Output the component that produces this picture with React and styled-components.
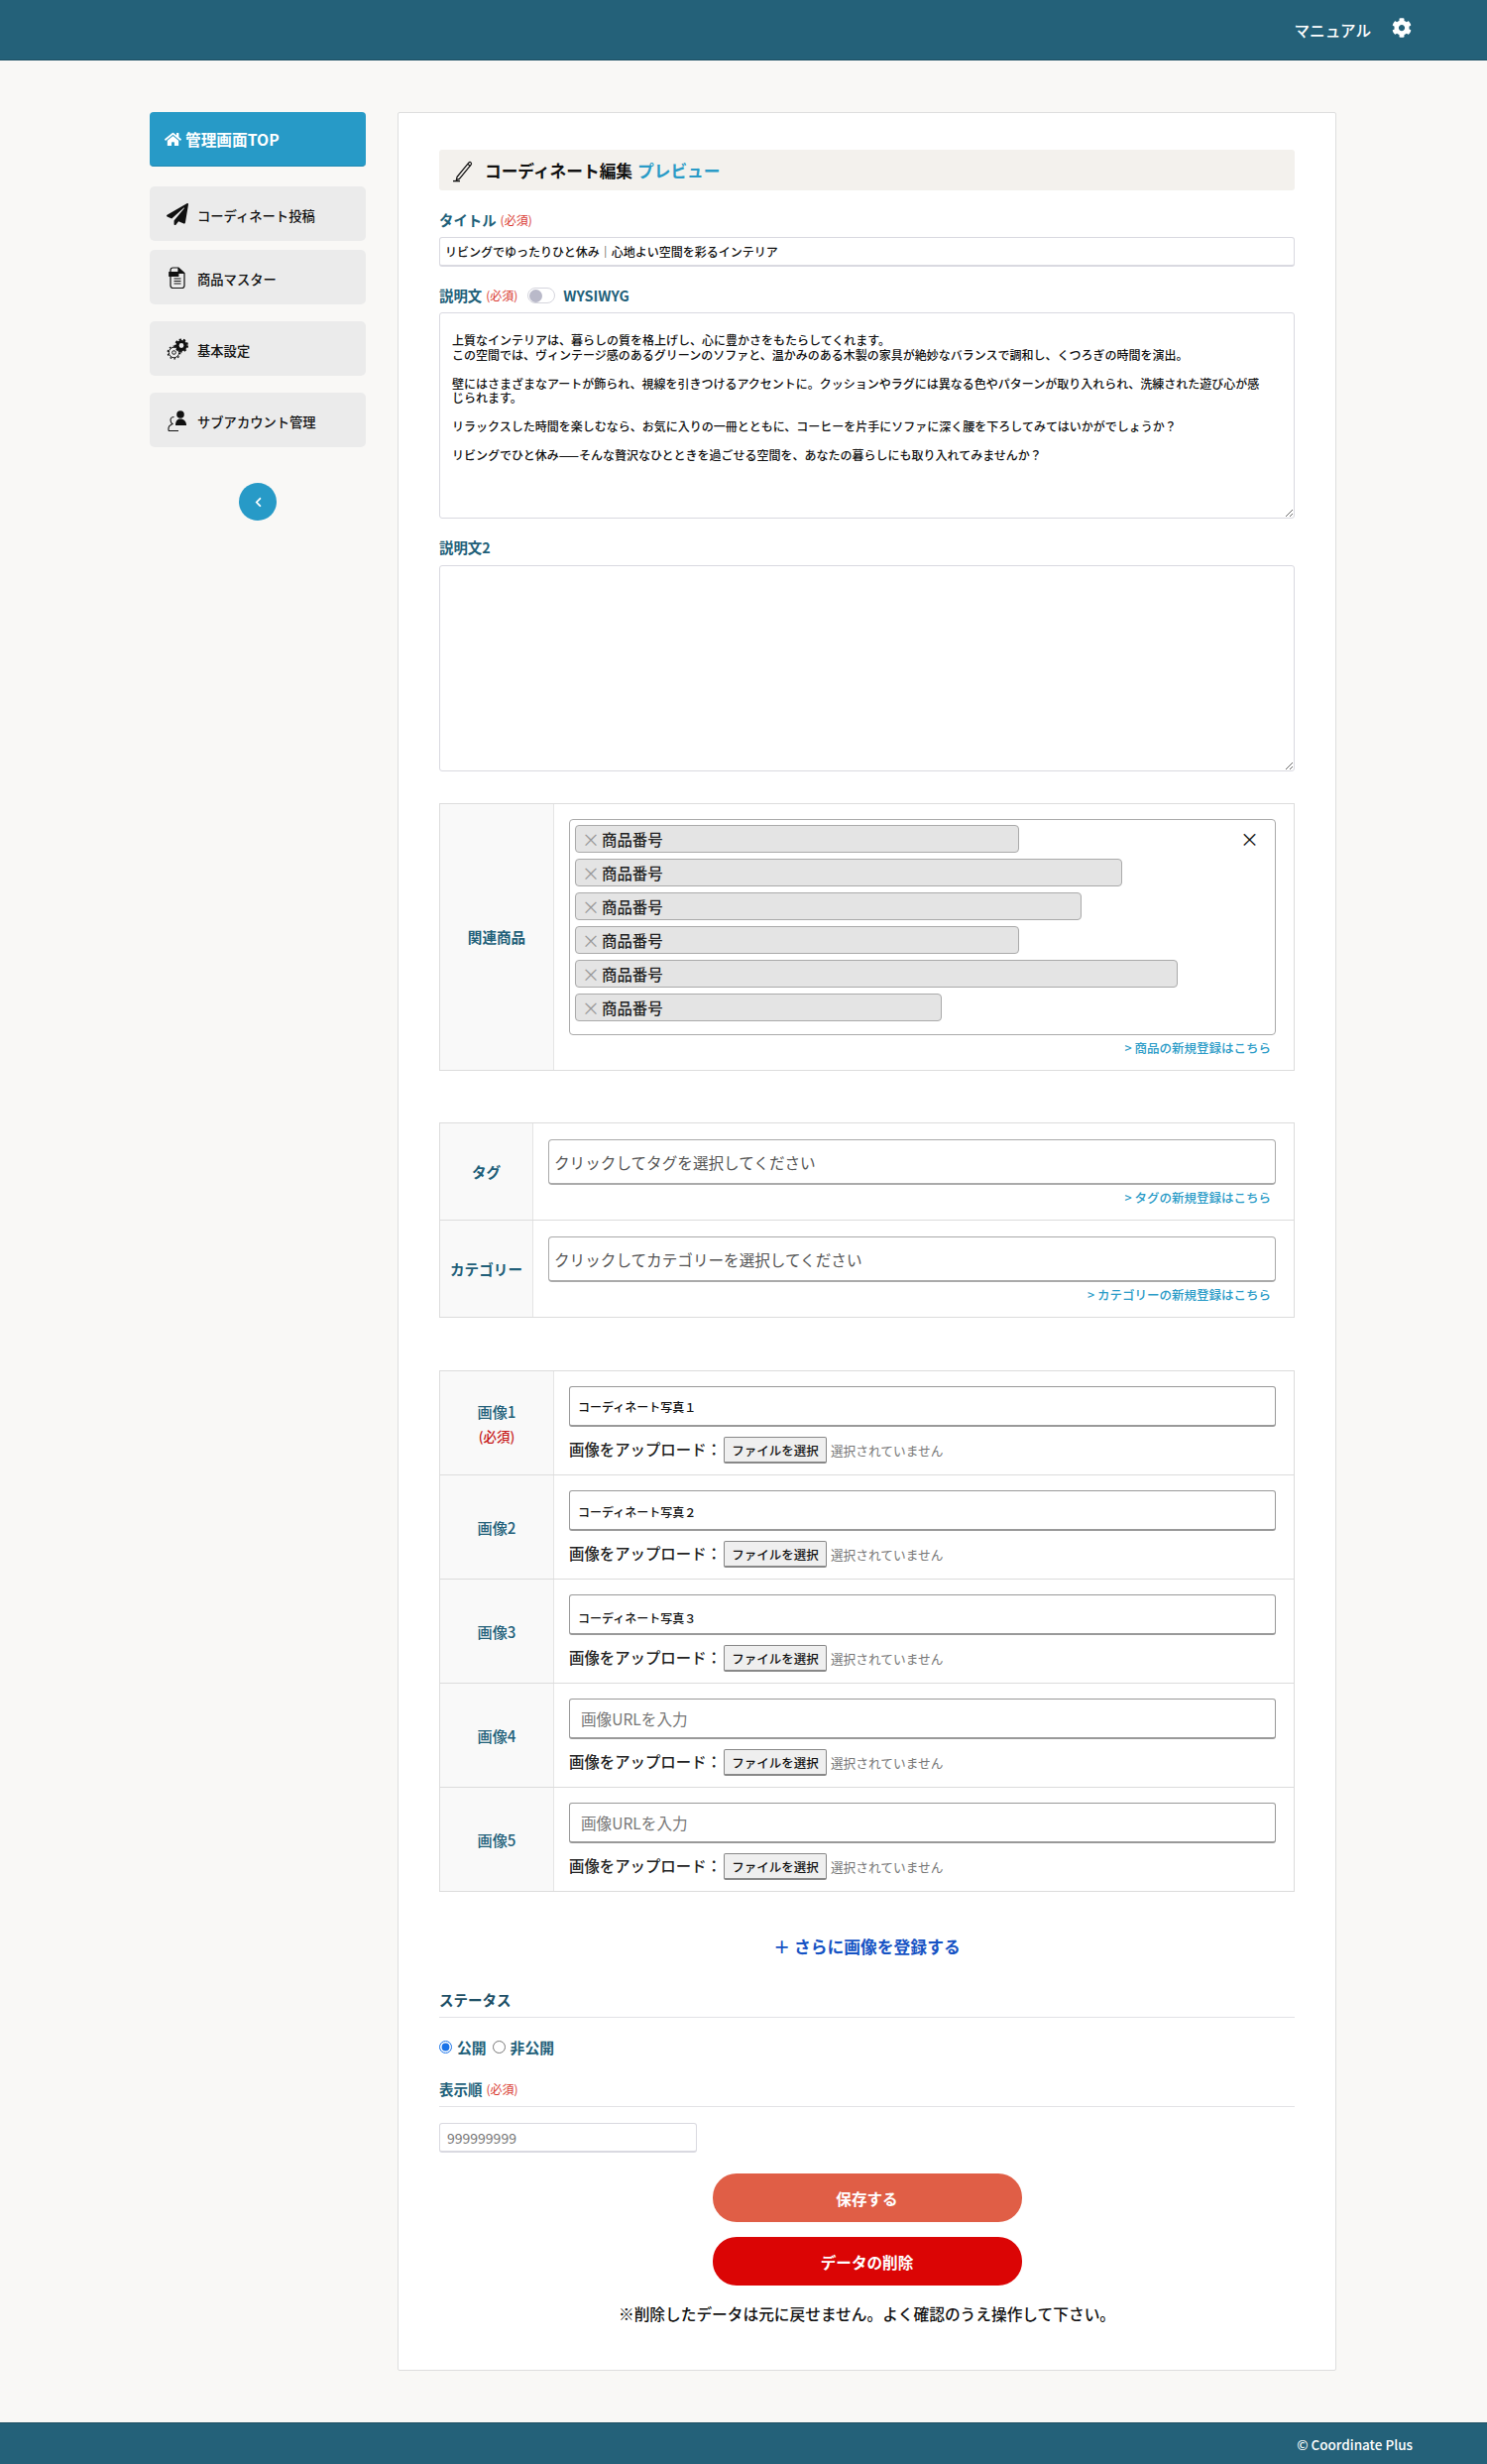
import React from "react";
import styled, { createGlobalStyle } from "styled-components";
import { FaHome, FaPaperPlane, FaCog, FaChevronLeft } from "react-icons/fa";

const Global = createGlobalStyle`
  html, body { margin: 0; padding: 0; background: #f9f8f6; }
  body { font-family: "Noto Sans CJK JP", "Noto Sans", sans-serif; color: #111; }
  * { box-sizing: border-box; }
`;

const TEAL = "#215f79";
const BLUE = "#2a9bc7";

const Header = styled.header`
  height: 61px; background: #246179; border-bottom: 1px solid #1d4f63;
  display: flex; align-items: center; justify-content: flex-end; gap: 21px;
  padding: 0 76px 1px 0; color: #fff;
`;
const HeaderLink = styled.a`font-size: 15.6px; font-weight: 500; line-height: 20px; margin: 0 0 0 -2px;`;
const GearButton = styled.span`display: flex; font-size: 20px; margin-top: -3px;`;

const Shell = styled.div`
  display: flex; align-items: flex-start; gap: 32px;
  padding: 52px 0 52px 151px;
`;
const Side = styled.nav`width: 218px; display: flex; flex-direction: column;`;
const TopLink = styled.a`
  height: 55px; background: #279ac7; border-radius: 4px; color: #fff;
  display: flex; align-items: center; gap: 4px; padding-left: 15px;
  font-size: 15.7px; font-weight: 700; border-bottom: 1px solid #2289b2;
  svg { font-size: 17px; }
`;
const SideLink = styled.a`
  height: 55px; margin-top: ${p => p.$mt}px; background: #ebebeb; border-radius: 5px;
  display: flex; align-items: center; gap: 9px; padding: 3px 0 0 17px;
  font-size: 13.3px; color: #111; font-weight: 500;
  svg { width: 22px; height: 24px; flex: none; margin-top: -3px; }
`;
const Collapse = styled.button`
  width: 38px; height: 38px; border-radius: 50%; border: 0; background: #279ac7; color: #fff;
  align-self: center; margin-top: 36px; display: flex; align-items: center; justify-content: center;
  font-size: 11px; padding: 0;
`;

const Card = styled.main`
  width: 947px; background: #fff; border: 1px solid #dedede; border-radius: 2px;
  padding: 37px 41px 45px;
`;
const Title = styled.h1`
  margin: 0 0 20px; height: 41px; background: #f3f1ed; border-radius: 3px;
  display: flex; align-items: center; padding-left: 13px; gap: 9px;
  font-size: 16.7px; font-weight: 700; color: #111;
  svg { width: 24px; height: 24px; }
`;
const Preview = styled.a`color: ${BLUE}; margin-left: -4px;`;
const Label = styled.div`
  height: 20px; margin-bottom: ${p => p.$mb || 7}px; display: flex; align-items: center; gap: 4px;
  font-size: 14.4px; line-height: 20px; font-weight: 700; color: ${TEAL};
`;
const Req = styled.span`font-size: 12px; font-weight: 400; color: #d9392f;`;
const TextInput = styled.input`
  display: block; width: 100%; height: 30px; border: 1px solid #d9d9e0; border-bottom-width: 2px; border-radius: 3px;
  padding: 0 5px; font: 500 12px "Noto Sans CJK JP", sans-serif; color: #111; background: #fff; outline: 0;
`;
const Group = styled.section`margin-top: 19px;`;
const Area = styled.textarea`
  display: block; width: 100%; height: 208px; border: 1px solid #d9d9e0; border-radius: 3px;
  padding: 20px 27px 0 12px; font: 500 12px/14.5px "Noto Sans CJK JP", sans-serif; color: #111;
  background: #fff; outline: 0; overflow: hidden;
`;
const Switch = styled.span`
  width: 28px; height: 16px; margin-left: 6px; margin-right: 4px; border: 1px solid #d5d5dd; border-radius: 8px;
  background: #fff; display: flex; align-items: center; padding-left: 1px;
  &::before { content: ""; width: 13px; height: 13px; border-radius: 50%; background: #b9b9c9; }
`;

const Table = styled.section`border: 1px solid #dcdcdc; margin-top: ${p => p.$mt}px;`;
const Row = styled.div`
  display: grid; grid-template-columns: ${p => p.$w}px 1fr;
  & + & { border-top: 1px solid #dcdcdc; }
`;
const Head = styled.div`
  background: #f9f9f9; border-right: 1px solid #e4e4e4; display: flex; flex-direction: column;
  align-items: center; justify-content: center; gap: 3px; color: ${TEAL};
  font-size: ${p => p.$size || 14.6}px; font-weight: ${p => p.$w || 700}; line-height: 22px;
`;
const ReqDark = styled.span`font-size: 13.5px; color: #c71a1a;`;
const Cell = styled.div`padding: ${p => p.$pt}px 18px ${p => p.$pb}px 15px;`;
const Picker = styled.div`
  position: relative; height: 218px; border: 1px solid #aaa; border-radius: 4px; padding: 5px;
  display: flex; flex-direction: column; align-items: flex-start; gap: 6px; background: #fff;
`;
const Chip = styled.div`
  width: ${p => p.$w}px; height: 28px; background: #e4e4e4; border: 1px solid #aaa; border-radius: 4px;
  display: flex; align-items: center; font-size: 15.4px; font-weight: 500; color: #222; padding-left: 6px; gap: 6px;
`;
const ChipX = styled.span`font-size: 18px; color: #999; font-weight: 400; width: 14px; text-align: center;`;
const Clear = styled.span`position: absolute; right: 16px; top: 7px; font-size: 19px; color: #111; line-height: 24px;`;
const NewLink = styled.a`
  display: block; height: 18px; margin: 4px 5px 0 0; text-align: right;
  font-size: 12.5px; line-height: 18px; font-weight: 500; color: ${BLUE};
`;
const SelectBox = styled.div`
  height: 46px; border: 1px solid #aaa; border-bottom-width: 2px; border-radius: 4px; padding: 1px 5px 0;
  display: flex; align-items: center; font-size: 15.6px; color: #555; background: #fff;
`;
const UrlBox = styled.input`
  display: block; width: 100%; height: 41px; border: 1px solid #999; border-bottom-width: 2px; border-radius: 3px;
  padding: ${p => p.$top || 0}px ${p => p.$filled ? 8 : 11}px 0; background: #fff; outline: 0;
  font: ${p => p.$filled ? "500 12px" : "400 15.6px"} "Noto Sans CJK JP", sans-serif;
  color: #111;
  &::placeholder { color: #777; opacity: 1; }
`;
const Upload = styled.div`
  margin-top: 10px; height: 27px; display: flex; align-items: center;
  font-size: 15.4px; font-weight: 500; color: #222;
`;
const UploadText = styled.span`margin-top: -3px;`;
const FileBtn = styled.button`
  width: 104px; height: 27px; margin: 0 4px 0 2px; padding: 0; background: #efefef; border: 1px solid #888; border-bottom-width: 2px; border-radius: 2px;
  font: 500 12.5px "Noto Sans CJK JP", sans-serif; color: #111;
`;
const FileState = styled.span`font-size: 12.7px; font-weight: 400; color: #777;`;

const AddMore = styled.a`
  display: block; height: 24px; margin-top: 43px; text-align: center;
  font-size: 16.8px; line-height: 24px; font-weight: 700; color: #1653c4;
`;
const Section = styled.div`
  margin-top: ${p => p.$mt}px; height: 28px; padding-bottom: 8px; border-bottom: 1px solid #e2e2e6;
  display: flex; align-items: center; gap: 4px; font-size: 14.5px; line-height: 20px; font-weight: 700; color: ${p => p.$c || "#1d4f66"};
`;
const Radios = styled.div`
  margin-top: 19px; height: 20px; display: flex; align-items: center;
  font-size: 14.8px; font-weight: 700; color: ${TEAL};
`;
const RadioLabel = styled.label`display: flex; align-items: center; gap: 5px; margin-right: 6px;`;
const Radio = styled.input`margin: 0; width: 13px; height: 13px; accent-color: #1a73e8;`;
const Order = styled.input`
  display: block; margin-top: 16px; width: 260px; height: 30px; border: 1px solid #d9d9e0; border-bottom-width: 2px; border-radius: 3px;
  padding: 0 7px; font: 400 14px "Noto Sans CJK JP", sans-serif; background: #fff; outline: 0;
  &::placeholder { color: #777; opacity: 1; }
`;
const Pill = styled.button`
  display: block; width: 312px; height: 49px; margin: ${p => p.$mt}px auto 0; border: 0; border-radius: 24px;
  background: ${p => p.$bg}; color: #fff; font: 700 15.6px "Noto Sans CJK JP", sans-serif;
`;
const Note = styled.p`
  margin: 18px 0 0; height: 22px; text-align: center; font-size: 15.7px; line-height: 22px; font-weight: 500; color: #111;
`;
const Footer = styled.footer`
  height: 42px; background: #246179; border-top: 1px solid #1d4f63; color: #fff; display: flex; align-items: center; justify-content: flex-end;
  padding-right: 75px; font-size: 13.5px; font-weight: 500;
`;

const PenIcon = () => (
  <svg viewBox="0 0 24 24" fill="none" stroke="#111" strokeWidth="1.2">
    <path d="M5 18.5 16.8 4.2c.7-.8 1.5-.9 2.2-.3.7.6.7 1.4.1 2.2L7.4 20.4l-3 1z" />
    <path d="M15.8 5.4l2.6 2.1" />
    <path d="M1 22.6h7" strokeWidth="1.4" />
  </svg>
);
const DocIcon = () => (
  <svg viewBox="0 0 22 24" fill="none" stroke="#111" strokeWidth="1.2">
    <path d="M4 8V4.5C4 3 5 2 6.5 2H12l6 5.5V20c0 1.5-1 2.5-2.5 2.5h-9C5 22.500 4 21.500 4 20z" />
    <path d="M2.800 6.500h9v4h-9z" fill="#111" />
    <path d="M12 2v5.500h6" fill="#111" />
    <path d="M7.500 13h7M7.500 15.500h7M7.500 18h7" />
  </svg>
);
const GearsIcon = () => (
  <svg viewBox="0 0 22 24" fill="none">
    <circle cx="7.500" cy="15.500" r="5.200" stroke="#111" strokeWidth="1" />
    <circle cx="7.500" cy="15.500" r="6.300" stroke="#111" strokeWidth="1.300" strokeDasharray="1.800 2.200" />
    <circle cx="7.500" cy="15.500" r="1.800" stroke="#111" />
    <circle cx="15" cy="8.500" r="4" stroke="#111" strokeWidth="3.200" />
    <circle cx="15" cy="8.500" r="6" stroke="#111" strokeWidth="2" strokeDasharray="2.300 1.900" />
  </svg>
);
const UsersIcon = () => (
  <svg viewBox="0 0 22 24" fill="none">
    <path d="M2 22.500v-3c0-2 2.500-3 4-4-1.500-1-2-2.500-2-4s1.500-3 3.500-3M2 22.500h10" stroke="#111" strokeWidth="1.100" />
    <circle cx="14" cy="6" r="3.800" fill="#111" />
    <path d="M9 17c0-4 1.500-6.500 5-6.500s6 2.500 6 6.500z" fill="#111" />
  </svg>
);

const description = `上質なインテリアは、暮らしの質を格上げし、心に豊かさをもたらしてくれます。
この空間では、ヴィンテージ感のあるグリーンのソファと、温かみのある木製の家具が絶妙なバランスで調和し、くつろぎの時間を演出。

壁にはさまざまなアートが飾られ、視線を引きつけるアクセントに。クッションやラグには異なる色やパターンが取り入れられ、洗練された遊び心が感じられます。

リラックスした時間を楽しむなら、お気に入りの一冊とともに、コーヒーを片手にソファに深く腰を下ろしてみてはいかがでしょうか？

リビングでひと休み——そんな贅沢なひとときを過ごせる空間を、あなたの暮らしにも取り入れてみませんか？`;

const chipWidths = [448, 552, 511, 448, 608, 370];
const images = [
  { n: 1, v: "コーディネート写真１", req: true, top: 0 },
  { n: 2, v: "コーディネート写真２", top: 2 },
  { n: 3, v: "コーディネート写真３", top: 6 },
  { n: 4 },
  { n: 5 },
];

export default function App() {
  return (
    <>
      <Global />
      <Header>
        <HeaderLink>マニュアル</HeaderLink>
        <GearButton><FaCog /></GearButton>
      </Header>
      <Shell>
        <Side>
          <TopLink><FaHome />管理画面TOP</TopLink>
          <SideLink $mt={20}><FaPaperPlane size={20} />コーディネート投稿</SideLink>
          <SideLink $mt={9}><DocIcon />商品マスター</SideLink>
          <SideLink $mt={17}><GearsIcon />基本設定</SideLink>
          <SideLink $mt={17}><UsersIcon />サブアカウント管理</SideLink>
          <Collapse aria-label="閉じる"><FaChevronLeft /></Collapse>
        </Side>
        <Card>
          <Title><PenIcon /><span>コーディネート編集</span><Preview>プレビュー</Preview></Title>
          <Label>タイトル <Req>(必須)</Req></Label>
          <TextInput readOnly value="リビングでゆったりひと休み｜心地よい空間を彩るインテリア" />
          <Group>
            <Label>説明文 <Req>(必須)</Req><Switch />WYSIWYG</Label>
            <Area readOnly value={description} />
          </Group>
          <Group>
            <Label $mb={8}>説明文2</Label>
            <Area readOnly value="" />
          </Group>

          <Table $mt={32}>
            <Row $w={115}>
              <Head>関連商品</Head>
              <Cell $pt={15} $pb={13}>
                <Picker>
                  {chipWidths.map((w, i) => (
                    <Chip key={i} $w={w}><ChipX>×</ChipX>商品番号</Chip>
                  ))}
                  <Clear>×</Clear>
                </Picker>
                <NewLink>&gt; 商品の新規登録はこちら</NewLink>
              </Cell>
            </Row>
          </Table>

          <Table $mt={52}>
            <Row $w={94}>
              <Head>タグ</Head>
              <Cell $pt={16} $pb={13}>
                <SelectBox>クリックしてタグを選択してください</SelectBox>
                <NewLink>&gt; タグの新規登録はこちら</NewLink>
              </Cell>
            </Row>
            <Row $w={94}>
              <Head>カテゴリー</Head>
              <Cell $pt={16} $pb={13}>
                <SelectBox>クリックしてカテゴリーを選択してください</SelectBox>
                <NewLink>&gt; カテゴリーの新規登録はこちら</NewLink>
              </Cell>
            </Row>
          </Table>

          <Table $mt={53}>
            {images.map(img => (
              <Row $w={115} key={img.n}>
                <Head $w={500} $size={15.2}>
                  <span>画像{img.n}</span>
                  {img.req && <ReqDark>(必須)</ReqDark>}
                </Head>
                <Cell $pt={15} $pb={11}>
                  <UrlBox readOnly $filled={!!img.v} $top={img.top} value={img.v || ""} placeholder="画像URLを入力" />
                  <Upload>
                    <UploadText>画像をアップロード：</UploadText>
                    <FileBtn>ファイルを選択</FileBtn>
                    <FileState>選択されていません</FileState>
                  </Upload>
                </Cell>
              </Row>
            ))}
          </Table>

          <AddMore>＋ さらに画像を登録する</AddMore>
          <Section $mt={32}>ステータス</Section>
          <Radios>
            <RadioLabel><Radio type="radio" name="status" defaultChecked />公開</RadioLabel>
            <RadioLabel><Radio type="radio" name="status" />非公開</RadioLabel>
          </Radios>
          <Section $mt={23} $c={TEAL}>表示順 <Req>(必須)</Req></Section>
          <Order placeholder="999999999" />
          <Pill $mt={21} $bg="#e05e46">保存する</Pill>
          <Pill $mt={15} $bg="#db0505">データの削除</Pill>
          <Note>※削除したデータは元に戻せません。よく確認のうえ操作して下さい。</Note>
        </Card>
      </Shell>
      <Footer>© Coordinate Plus</Footer>
    </>
  );
}
